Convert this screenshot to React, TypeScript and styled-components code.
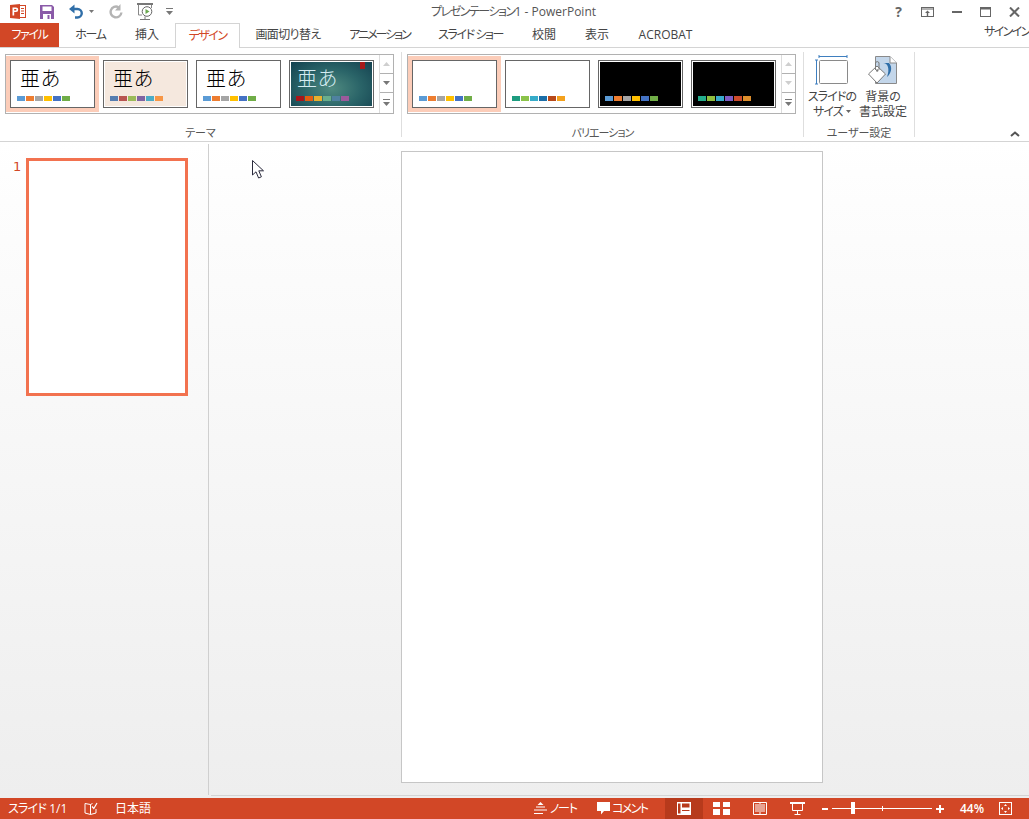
import React from "react";
import styled, { createGlobalStyle } from "styled-components";

const GlobalStyle = createGlobalStyle`
  html, body { margin: 0; padding: 0; height: 100%; overflow: hidden; background: #fff; }
  #root { height: 100%; }
  * { box-sizing: border-box; }
`;

const FONT = `"Open Sans", "Noto Sans CJK JP", "Noto Sans", sans-serif`;
const RED = "#d24726";

const Window = styled.div`
  width: 1029px;
  height: 819px;
  display: flex;
  flex-direction: column;
  position: relative;
  overflow: hidden;
  font-family: ${FONT};
  font-feature-settings: "palt";
  color: #444;
`;

/* kana runs are narrower in the original ui font */
const Kana = styled.span<{ $track: number }>`
  letter-spacing: ${(p) => p.$track}px;
`;

/* title bar */
const TitleBar = styled.div`
  height: 23px;
  display: flex;
  align-items: center;
`;
const Qat = styled.div`
  display: flex;
  align-items: center;
  padding-left: 10px;
  width: 400px;
`;
const QatIcon = styled.svg<{ $gap?: number }>`
  display: block;
  flex: none;
  margin-right: ${(p) => p.$gap ?? 0}px;
`;
const Title = styled.div`
  margin-left: 31px;
  font-size: 12px;
  line-height: 18px;
  color: #555;
  white-space: nowrap;
`;
const WinControls = styled.div`
  margin-left: auto;
  display: flex;
  align-items: center;
`;
const WinButton = styled.div`
  width: 29px;
  height: 18px;
  display: flex;
  align-items: center;
  justify-content: center;
  color: #666;
  font-size: 14px;
  font-weight: 700;
`;

/* tabs */
const TabRow = styled.div`
  height: 25px;
  display: flex;
  border-bottom: 1px solid #d4d4d4;
`;
const FileTab = styled.div`
  width: 59px;
  height: 24px;
  background: ${RED};
  color: #fff;
  font-size: 12px;
  line-height: 24px;
  text-align: center;
  letter-spacing: -1.4px;
`;
const Tab = styled.div<{ $width: number; $active?: boolean; $track?: number }>`
  width: ${(p) => p.$width}px;
  height: ${(p) => (p.$active ? 25 : 24)}px;
  margin-left: ${(p) => (p.$active ? 3 : 0)}px;
  font-size: 12px;
  line-height: 24px;
  letter-spacing: ${(p) => p.$track ?? 0}px;
  text-align: center;
  white-space: nowrap;
  color: ${(p) => (p.$active ? RED : "#444")};
  background: #fff;
  ${(p) =>
    p.$active ? "border: 1px solid #d4d4d4; border-bottom: none; line-height: 23px;" : ""}
`;
const SignIn = styled.div`
  margin-left: auto;
  width: 45px;
  font-size: 12px;
  line-height: 18px;
  letter-spacing: -1.6px;
  white-space: nowrap;
  color: #444;
`;

/* ribbon */
const Ribbon = styled.div`
  height: 94px;
  display: flex;
  border-bottom: 1px solid #d4d4d4;
  background: #fff;
`;
const Group = styled.div<{ $width: number }>`
  width: ${(p) => p.$width}px;
  height: 85px;
  margin-top: 4px;
  border-right: 1px solid #dedede;
  display: flex;
  flex-direction: column;
`;
const GroupBody = styled.div<{ $pad: number }>`
  height: 74px;
  flex: none;
  padding: 2px 0 0 ${(p) => p.$pad}px;
  display: flex;
`;
const GroupLabel = styled.div<{ $track?: number }>`
  flex: none;
  text-align: center;
  font-size: 11px;
  line-height: 14px;
  letter-spacing: ${(p) => p.$track ?? 0}px;
  color: #555;
`;
const Gallery = styled.div`
  width: 389px;
  height: 60px;
  border: 1px solid #b1b1b1;
  display: flex;
`;
const GalleryItems = styled.div`
  width: 373px;
  height: 58px;
  padding-top: 1px;
  display: flex;
`;
const GalleryItem = styled.div<{ $selected?: boolean }>`
  width: 93px;
  height: 56px;
  padding: 4px;
  background: ${(p) => (p.$selected ? "#fccdb9" : "transparent")};
`;
const Thumb = styled.div<{ $bg: string; $ink?: string; $inset?: boolean }>`
  width: 85px;
  height: 48px;
  border: 1px solid #666;
  background: ${(p) => p.$bg};
  color: ${(p) => p.$ink ?? "#000"};
  box-shadow: ${(p) => (p.$inset ? "inset 0 0 0 1px #fff" : "none")};
  padding: 4px 0 0 6px;
  display: flex;
  flex-direction: column;
  position: relative;
`;
const ThumbGlyph = styled.div<{ $left: number }>`
  height: 31px;
  margin-left: ${(p) => p.$left}px;
  font-size: 20px;
  line-height: 26px;
  letter-spacing: 0.5px;
  font-family: "Noto Sans CJK JP", sans-serif;
  font-weight: 300;
  font-feature-settings: normal;
  white-space: nowrap;
`;
const ThumbBlank = styled.div`
  height: 31px;
`;
const Swatches = styled.div`
  display: flex;
  gap: 1px;
`;
const Swatch = styled.div<{ $color: string }>`
  width: 8px;
  height: 5px;
  background: ${(p) => p.$color};
`;
const Bookmark = styled.div`
  position: absolute;
  top: 1px;
  right: 8px;
  width: 5px;
  height: 7px;
  background: #a51a1a;
`;
const Spinner = styled.div`
  width: 14px;
  display: flex;
  flex-direction: column;
  border-left: 1px solid #dcdcdc;
`;
const SpinButton = styled.div<{ $active?: boolean; $last?: boolean }>`
  height: 19px;
  flex: none;
  display: flex;
  align-items: center;
  justify-content: center;
  color: ${(p) => (p.$active ? "#777" : "#cfcfcf")};
  border-bottom: ${(p) => (p.$last ? "none" : "1px solid #b1b1b1")};
`;

/* custom group */
const BigButton = styled.div<{ $width: number }>`
  width: ${(p) => p.$width}px;
  display: flex;
  flex-direction: column;
  align-items: center;
`;
const BigIcon = styled.svg`
  display: block;
  flex: none;
  margin-top: 1px;
`;
const BigLabel = styled.div`
  margin-top: 3px;
  font-size: 12px;
  line-height: 15px;
  text-align: center;
  color: #444;
  white-space: nowrap;
`;
const CollapseWrap = styled.div`
  flex: 1;
  display: flex;
  justify-content: flex-end;
  align-items: flex-end;
  padding: 0 9px 4px 0;
`;

/* workspace */
const Workspace = styled.div`
  flex: 1;
  display: flex;
  background: linear-gradient(#fff 0, #fdfdfd 60px, #eeeeee 100%);
`;
const Sidebar = styled.div`
  width: 209px;
  margin: 2px 0 3px;
  border-right: 1px solid #cfcfcf;
  padding: 14px 0 0 13px;
  display: flex;
  align-items: flex-start;
`;
const SlideNumber = styled.div`
  width: 13px;
  font-family: "DejaVu Sans", sans-serif;
  font-size: 13px;
  line-height: 17px;
  color: ${RED};
`;
const SlideThumb = styled.div`
  width: 162px;
  height: 238px;
  background: #fff;
  border: 3px solid #f2724f;
`;
const Stage = styled.div`
  flex: 1;
  display: flex;
  flex-direction: column;
`;
const Canvas = styled.div`
  flex: 1;
  padding: 9px 0 0 192px;
`;
const Slide = styled.div`
  width: 422px;
  height: 632px;
  background: #fff;
  border: 1px solid #c6c6c6;
`;
const HScroll = styled.div`
  height: 3px;
  margin-left: 2px;
  border-top: 1px solid #d4d4d4;
`;

/* status bar */
const StatusBar = styled.div`
  height: 21px;
  background: ${RED};
  color: #fff;
  display: flex;
  align-items: center;
  font-size: 12px;
`;
const StatusText = styled.div<{ $left: number; $width: number; $strong?: boolean }>`
  margin-left: ${(p) => p.$left}px;
  width: ${(p) => p.$width}px;
  flex: none;
  white-space: nowrap;
  line-height: 21px;
  font-weight: ${(p) => (p.$strong ? 600 : 400)};
`;
const StatusIcon = styled.svg<{ $left: number }>`
  margin-left: ${(p) => p.$left}px;
  flex: none;
  display: block;
`;
const ViewSlot = styled.div`
  margin-left: 18px;
  width: 38px;
  height: 21px;
  flex: none;
  background: #b73a1c;
  display: flex;
  align-items: center;
  justify-content: center;
`;
const Zoom = styled.div`
  margin-left: 17px;
  width: 122px;
  height: 21px;
  flex: none;
  display: flex;
  align-items: center;
`;
const ZoomLine = styled.div`
  width: 100px;
  height: 1px;
  margin: 0 4px;
  flex: none;
  background: #fff;
  position: relative;
`;
const ZoomKnob = styled.div`
  position: absolute;
  left: 19px;
  top: -6px;
  width: 4px;
  height: 12px;
  background: #fff;
`;
const ZoomTick = styled.div`
  position: absolute;
  left: 50px;
  top: -2px;
  width: 1px;
  height: 5px;
  background: #fff;
`;
const ZoomSign = styled.div<{ $size: number }>`
  width: ${(p) => p.$size}px;
  height: 2px;
  background: #fff;
  position: relative;
  flex: none;
`;
const PlusBar = styled.div`
  position: absolute;
  left: 3px;
  top: -3px;
  width: 2px;
  height: 8px;
  background: #fff;
`;

const Cursor = styled.svg`
  position: absolute;
  left: 251px;
  top: 159px;
`;

const THEME_A = ["#5b9bd5", "#ed7d31", "#a5a5a5", "#ffc000", "#4472c4", "#70ad47"];
const THEME_B = ["#557db0", "#b85450", "#9bbb59", "#8064a2", "#4bacc6", "#f79646"];
const THEME_D = ["#a8151a", "#e35d11", "#e8b02e", "#69ae8c", "#4f81a0", "#9c5a9c"];
const VAR_B = ["#1e9c7f", "#8bc34a", "#36acc9", "#1b6ea8", "#b8491a", "#f4a11c"];
const VAR_D = ["#24ad8c", "#8fbe3f", "#38aacb", "#7e5cc4", "#cc4b2c", "#dd8e2c"];

const themes = [
  { bg: "#fff", colors: THEME_A, selected: true, left: 3 },
  { bg: "#f5e8de", colors: THEME_B, inset: true, left: 3 },
  { bg: "#fff", colors: THEME_A, left: 3 },
  {
    bg: "radial-gradient(ellipse at 50% 60%, #4f8a80 0%, #2a6468 50%, #123f4e 100%)",
    ink: "#d5ecf2",
    colors: THEME_D,
    inset: true,
    mark: true,
    left: 1,
  },
];
const variations = [
  { bg: "#fff", colors: THEME_A, selected: true },
  { bg: "#fff", colors: VAR_B },
  { bg: "#000", colors: THEME_A, inset: true },
  { bg: "#000", colors: VAR_D, inset: true },
];

const tabs = [
  { label: "ホーム", width: 63, track: -1.3 },
  { label: "挿入", width: 50 },
  { label: "デザイン", width: 65, active: true, track: -1.5 },
  { label: "画面切り替え", width: 96, track: -0.6 },
  { label: "アニメーション", width: 87, track: -2 },
  { label: "スライド ショー", width: 95, track: -1.4 },
  { label: "校閲", width: 52 },
  { label: "表示", width: 54 },
  { label: "ACROBAT", width: 83 },
];

const Arrow = ({ up }: { up?: boolean }) => (
  <svg width="7" height="4" viewBox="0 0 7 4">
    <path d={up ? "M3.5 0 7 4H0Z" : "M0 0H7L3.5 4Z"} fill="currentColor" />
  </svg>
);

const Spin = ({ scrollable }: { scrollable?: boolean }) => (
  <Spinner>
    <SpinButton>
      <Arrow up />
    </SpinButton>
    <SpinButton $active={scrollable}>
      <Arrow />
    </SpinButton>
    <SpinButton $active $last>
      <svg width="7" height="7" viewBox="0 0 7 7">
        <path d="M0 0H7V1H0ZM0 3H7L3.5 7Z" fill="currentColor" />
      </svg>
    </SpinButton>
  </Spinner>
);

const Colors = ({ colors }: { colors: string[] }) => (
  <Swatches>
    {colors.map((c, i) => (
      <Swatch key={i} $color={c} />
    ))}
  </Swatches>
);

export default function App() {
  return (
    <Window>
      <GlobalStyle />
      <TitleBar>
        <Qat>
          {/* powerpoint logo */}
          <QatIcon $gap={14} width="16" height="15" viewBox="0 0 16 15">
            <rect x="8" y="1.5" width="7.5" height="12" fill="#fff" stroke="#d24726" />
            <path d="M11 4.5h3M11 7h3M11 9.5h3" stroke="#d24726" />
            <path d="M0 1 10 0V15L0 14Z" fill="#d24726" />
            <path d="M2.5 3.5H6A2.2 2.2 0 0 1 6 8H4.2V11.5H2.5ZM4.2 5V6.6H5.7A.8.8 0 0 0 5.7 5Z" fill="#fff" />
          </QatIcon>
          {/* save */}
          <QatIcon $gap={15} width="14" height="15" viewBox="0 0 14 15">
            <path d="M0 1H12L14 3V15H0Z" fill="#8a5aa8" />
            <rect x="2.5" y="2.5" width="9" height="4.5" fill="#fff" />
            <rect x="3" y="10" width="8" height="5" fill="#fff" />
            <rect x="7.5" y="11" width="2" height="4" fill="#8a5aa8" />
          </QatIcon>
          {/* undo */}
          <QatIcon $gap={6} width="14" height="15" viewBox="0 0 14 15">
            <path d="M3 5H8.5A4 4 0 0 1 8.5 13.5H6" fill="none" stroke="#2f6ea8" strokeWidth="2.4" />
            <path d="M0 5 5.5 0.5V9.5Z" fill="#2f6ea8" />
          </QatIcon>
          <QatIcon $gap={15} width="5" height="3" viewBox="0 0 5 3">
            <path d="M0 0H5L2.5 3Z" fill="#777" />
          </QatIcon>
          {/* redo */}
          <QatIcon $gap={14} width="14" height="15" viewBox="0 0 14 15">
            <path d="M9.5 3.2A5.4 5.4 0 1 0 12.4 8.5" fill="none" stroke="#b4b4b4" strokeWidth="2.4" />
            <path d="M11.5 0V6.5H6Z" fill="#b4b4b4" />
          </QatIcon>
          {/* from beginning */}
          <QatIcon $gap={13} width="16" height="17" viewBox="0 0 16 17">
            <path d="M0 1H16" stroke="#555" strokeWidth="1.6" />
            <path d="M1.5 2V12H5" fill="none" stroke="#888" />
            <path d="M14.5 2V5" fill="none" stroke="#888" />
            <circle cx="10" cy="8.5" r="4.8" fill="#fff" stroke="#666" />
            <path d="M8.5 6 12.5 8.5 8.5 11Z" fill="#6aa84f" />
            <path d="M3 16.5H13M8 13.5V16.5" stroke="#777" />
          </QatIcon>
          <QatIcon width="7" height="7" viewBox="0 0 7 7">
            <path d="M0 0H7V1H0ZM0 3H7L3.5 7Z" fill="#777" />
          </QatIcon>
        </Qat>
        <Title>
          <Kana $track={-1.5}>プレゼンテーション</Kana>1 - PowerPoint
        </Title>
        <WinControls>
          <WinButton>?</WinButton>
          <WinButton>
            <svg width="13" height="10" viewBox="0 0 13 10">
              <rect x=".5" y=".5" width="12" height="9" fill="none" stroke="#666" />
              <path d="M.5 2H12.5" stroke="#666" />
              <path d="M6.5 3.5 9 6H7.2V9H5.8V6H4Z" fill="#666" />
            </svg>
          </WinButton>
          <WinButton>
            <svg width="10" height="2" viewBox="0 0 10 2">
              <rect width="10" height="2" fill="#666" />
            </svg>
          </WinButton>
          <WinButton>
            <svg width="11" height="10" viewBox="0 0 11 10">
              <rect x=".5" y=".5" width="10" height="9" fill="none" stroke="#666" />
              <rect width="11" height="2.5" fill="#666" />
            </svg>
          </WinButton>
          <WinButton>
            <svg width="11" height="10" viewBox="0 0 11 10">
              <path d="M1 .5 10 9.5M10 .5 1 9.5" stroke="#666" strokeWidth="2" />
            </svg>
          </WinButton>
        </WinControls>
      </TitleBar>

      <TabRow>
        <FileTab>ファイル</FileTab>
        {tabs.map((t) => (
          <Tab key={t.label} $width={t.width} $active={t.active} $track={t.track}>
            {t.label}
          </Tab>
        ))}
        <SignIn>サインイン</SignIn>
      </TabRow>

      <Ribbon>
        <Group $width={402}>
          <GroupBody $pad={5}>
            <Gallery>
              <GalleryItems>
                {themes.map((t, i) => (
                  <GalleryItem key={i} $selected={t.selected}>
                    <Thumb $bg={t.bg} $ink={t.ink} $inset={t.inset}>
                      <ThumbGlyph $left={t.left}>亜あ</ThumbGlyph>
                      <Colors colors={t.colors} />
                      {t.mark && <Bookmark />}
                    </Thumb>
                  </GalleryItem>
                ))}
              </GalleryItems>
              <Spin scrollable />
            </Gallery>
          </GroupBody>
          <GroupLabel>テーマ</GroupLabel>
        </Group>
        <Group $width={402}>
          <GroupBody $pad={5}>
            <Gallery>
              <GalleryItems>
                {variations.map((t, i) => (
                  <GalleryItem key={i} $selected={t.selected}>
                    <Thumb $bg={t.bg} $inset={t.inset}>
                      <ThumbBlank />
                      <Colors colors={t.colors} />
                    </Thumb>
                  </GalleryItem>
                ))}
              </GalleryItems>
              <Spin />
            </Gallery>
          </GroupBody>
          <GroupLabel $track={-1}>バリエーション</GroupLabel>
        </Group>
        <Group $width={111}>
          <GroupBody $pad={0}>
            <BigButton $width={56}>
              <BigIcon width="34" height="31" viewBox="0 0 34 31">
                <rect x="4.5" y="5.5" width="28" height="23" rx="1" fill="#fff" stroke="#8a8a8a" />
                <path d="M4 1.5H32M4 0V3M32 0V3" stroke="#3f7fbf" fill="none" />
                <path d="M1.5 5V29M0 5H3M0 29H3" stroke="#3f7fbf" fill="none" />
              </BigIcon>
              <BigLabel>
                <Kana $track={-0.9}>スライドの</Kana>
                <br />
                <Kana $track={-0.9}>サイズ</Kana>{" "}
                <svg width="5" height="3" viewBox="0 0 5 3" style={{ verticalAlign: 3 }}>
                  <path d="M0 0H5L2.5 3Z" fill="#666" />
                </svg>
              </BigLabel>
            </BigButton>
            <BigButton $width={46}>
              <BigIcon width="32" height="31" viewBox="0 0 32 31">
                <path d="M8.5 1.5H23L29.5 8V28.5H8.5Z" fill="#c3d6ea" stroke="#8a8a8a" />
                <path d="M23 1.5V8H29.5" fill="#fff" stroke="#8a8a8a" />
                <path d="M16 8C21 8 23 14 20 22C24 19 26 12 22 8Z" fill="#2f6ea8" />
                <path d="M1.5 19 10 11 18.5 19 10 28Z" fill="#fff" stroke="#7a7a7a" />
                <path d="M8.5 15V8A1.8 1.8 0 0 1 12 8V15" fill="none" stroke="#7a7a7a" />
                <circle cx="10.2" cy="15.5" r="1.2" fill="#7a7a7a" />
              </BigIcon>
              <BigLabel>
                背景の
                <br />
                書式設定
              </BigLabel>
            </BigButton>
          </GroupBody>
          <GroupLabel>ユーザー設定</GroupLabel>
        </Group>
        <CollapseWrap>
          <svg width="10" height="6" viewBox="0 0 10 6">
            <path d="M1 5 5 1.5 9 5" fill="none" stroke="#555" strokeWidth="2" />
          </svg>
        </CollapseWrap>
      </Ribbon>

      <Workspace>
        <Sidebar>
          <SlideNumber>1</SlideNumber>
          <SlideThumb />
        </Sidebar>
        <Stage>
          <Canvas>
            <Slide />
          </Canvas>
          <HScroll />
        </Stage>
      </Workspace>

      <StatusBar>
        <StatusText $left={8} $width={56}>
          <Kana $track={-0.8}>スライド</Kana> 1/1
        </StatusText>
        <StatusIcon $left={20} width="14" height="14" viewBox="0 0 14 14">
          <path d="M6.5 2.5 1 1.5V11L6.5 12.5V2.5ZM6.5 2.5 8.5 1.5M6.5 12.5 12 11V7" fill="none" stroke="#fff" />
          <path d="M8 4.5 9.8 6.5 13 1" fill="none" stroke="#fff" strokeWidth="1.2" />
        </StatusIcon>
        <StatusText $left={17} $width={36}>日本語</StatusText>
        <StatusIcon $left={383} width="13" height="13" viewBox="0 0 13 13">
          <path d="M6.5 0 9.5 3H3.5Z" fill="#fff" />
          <path d="M2 5H11M0 8H13M0 11.5H9" stroke="#fff" />
        </StatusIcon>
        <StatusText $left={3} $width={27}>
          <Kana $track={-1.3}>ノート</Kana>
        </StatusText>
        <StatusIcon $left={20} width="13" height="13" viewBox="0 0 13 13">
          <path d="M0 0H13V9H7L4 12.5V9H0Z" fill="#fff" />
        </StatusIcon>
        <StatusText $left={2} $width={35}>
          <Kana $track={-1.6}>コメント</Kana>
        </StatusText>
        <ViewSlot>
          <svg width="14" height="13" viewBox="0 0 14 13">
            <rect width="14" height="13" fill="#fff" />
            <rect x="1" y="1.5" width="2.5" height="10" fill="#b73a1c" />
            <rect x="5" y="1.5" width="7.5" height="4" fill="#b73a1c" />
            <rect x="5" y="8" width="7.5" height="1" fill="#b73a1c" />
          </svg>
        </ViewSlot>
        <StatusIcon $left={10} width="17" height="13" viewBox="0 0 17 13">
          <path d="M0 0H7V5H0ZM10 0H17V5H10ZM0 7H7V13H0ZM10 7H17V13H10Z" fill="#fff" />
        </StatusIcon>
        <StatusIcon $left={23} width="14" height="13" viewBox="0 0 14 13">
          <path d="M.5 .5H13.5V12.5H.5ZM7 .5V12.5" fill="none" stroke="#fff" />
          <path d="M2 3H6M2 5H6M2 7H6M2 9H6M8 3H12M8 5H12M8 7H12M8 9H12" stroke="#fff" />
        </StatusIcon>
        <StatusIcon $left={23} width="15" height="13" viewBox="0 0 15 13">
          <path d="M0 1H15" stroke="#fff" strokeWidth="2" />
          <path d="M2.5 2V8.5H12.5V2M7.5 8.5V12M4.5 12.5H10.5" fill="none" stroke="#fff" />
        </StatusIcon>
        <Zoom>
          <ZoomSign $size={6} />
          <ZoomLine>
            <ZoomKnob />
            <ZoomTick />
          </ZoomLine>
          <ZoomSign $size={8}>
            <PlusBar />
          </ZoomSign>
        </Zoom>
        <StatusText $left={16} $width={26} $strong>44%</StatusText>
        <StatusIcon $left={13} width="13" height="13" viewBox="0 0 13 13">
          <rect x=".5" y=".5" width="12" height="12" fill="none" stroke="#fff" />
          <path d="M6.5 2 8 4H5ZM6.5 11 5 9H8ZM2 6.5 4 5V8ZM11 6.5 9 8V5Z" fill="#fff" />
        </StatusIcon>
      </StatusBar>

      <Cursor width="14" height="21" viewBox="0 0 14 21">
        <path d="M1.5 1.5V16L5 12.8 7.6 19 10.4 17.8 7.8 11.8H12.5Z" fill="#fff" stroke="#2a2a3c" strokeWidth="1" />
      </Cursor>
    </Window>
  );
}
